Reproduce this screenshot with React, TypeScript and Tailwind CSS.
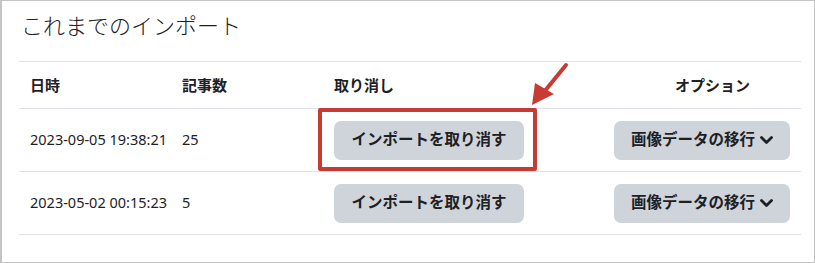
const rows = [
  { date: "2023-09-05 19:38:21", count: "25" },
  { date: "2023-05-02 00:15:23", count: "5" },
];

function Chevron() {
  return (
    <svg width="13" height="9" viewBox="0 0 13 9" className="ml-[5px]">
      <path d="M1.5 1.5 L6.5 6.5 L11.5 1.5" fill="none" stroke="#1d2125" strokeWidth="2.8" strokeLinecap="round" strokeLinejoin="round" />
    </svg>
  );
}

function Btn({ children, className = "" }: { children: React.ReactNode; className?: string }) {
  return (
    <button
      className={`h-[39px] rounded-[7px] bg-[#ced4da] text-[15.5px] font-bold text-[#1d2125] flex items-center justify-center ${className}`}
    >
      {children}
    </button>
  );
}

export default function App() {
  return (
    <div className="relative w-[815px] h-[263px] bg-white border border-l-2 border-[#c4c4c4] font-['Noto_Sans','Noto_Sans_CJK_JP',sans-serif] text-[#1d2125]">
      <div className="pl-[17px] pr-[13px]">
        <h3 className="h-[60px] pt-[11px] pl-[2px] text-[22px] font-light leading-[1.2]">これまでのインポート</h3>

        <div className="border-t border-[#dee2e6]">
          {/* header */}
          <div className="h-[47px] border-b border-[#dee2e6] grid grid-cols-[152px_152px_279px_199px] items-center text-[15px] font-bold">
            <div className="pl-[11px]">日時</div>
            <div className="pl-[11px]">記事数</div>
            <div className="pl-[11px]">取り消し</div>
            <div className="pl-[73px]">オプション</div>
          </div>

          {rows.map((r) => (
            <div
              key={r.date}
              className="h-[63px] border-b border-[#dee2e6] grid grid-cols-[152px_152px_279px_199px] items-center text-[14.5px]"
            >
              <div className="pl-[11px] whitespace-nowrap">{r.date}</div>
              <div className="pl-[11px]">{r.count}</div>
              <div className="pl-[11px]">
                <Btn className="w-[190px]">インポートを取り消す</Btn>
              </div>
              <div className="pl-[12px]">
                <Btn className="w-[176px]">
                  画像データの移行
                  <Chevron />
                </Btn>
              </div>
            </div>
          ))}
        </div>
      </div>

      {/* annotation */}
      <div className="absolute left-[316px] top-[107px] w-[219px] h-[63px] border-4 border-[#c63c35] rounded-[2px]" />
      <svg className="absolute left-[520px] top-[55px]" width="60" height="60" viewBox="0 0 60 60">
        <line x1="44" y1="9" x2="22" y2="36" stroke="#c63c35" strokeWidth="4" strokeLinecap="round" />
        <polygon points="10,49 13,27 32,38" fill="#c63c35" />
      </svg>
    </div>
  );
}
